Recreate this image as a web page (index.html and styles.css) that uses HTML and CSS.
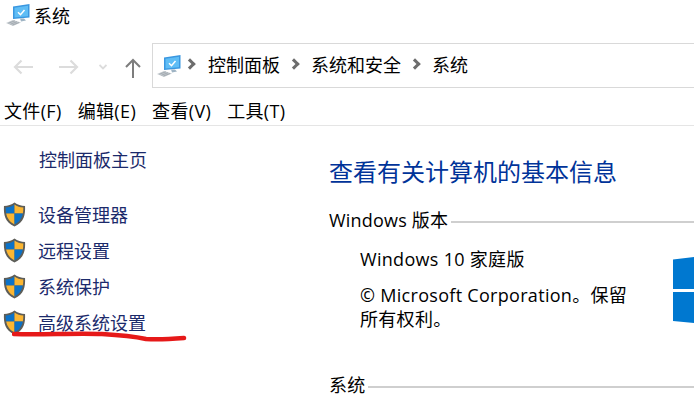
FILE: index.html
```html
<!DOCTYPE html>
<html lang="zh-CN">
	<head>
		<meta charset="UTF-8" />
		<meta name="viewport" content="width=device-width, initial-scale=1.0" />
		<title>系统</title>
		<link rel="stylesheet" href="styles.css">
	</head>
	<body>
		<svg width="0" height="0" class="defs">
			<defs>
				<symbol id="pc" viewBox="0 0 24 22">
					<path d="M7 2.500 23.500 0v13.500L7 15z" fill="#3a97e0"/>
					<path d="M8.500 3.700 22 1.700v10.600L8.500 13.600z" fill="#5fbdf5"/>
					<path d="m12 8.200 2.500 2.500 4-4.700" fill="none" stroke="#fff" stroke-width="1.500"/>
					<path d="M14 14.500h4l2 2-5 1z" fill="#9fb4c4"/>
					<path d="M0 19 7 16l8 2.500-8 3.500z" fill="#c3c9ce"/>
					<path d="M2.500 19.200 9 16.700M4.500 20.200l6.500-2.500M6.500 21l6.500-2.500" stroke="#8f979d" stroke-width=".6"/>
				</symbol>
				<symbol id="shield" viewBox="0 0 24 26">
					<path d="M12 .5C9 3 5 4 1 4c-.5 9 1 17 11 21.500C22 21 23.500 13 23 4c-4 0-8-1-11-3.500z" fill="#5d5d58"/>
					<path d="M12 2.500C9.500 4.500 6 5.500 2.800 5.700c0 2 .1 4 .5 6.300H12z" fill="#0b72c8"/>
					<path d="M12 2.500c2.500 2 6 3 9.200 3.200 0 2-.1 4-.5 6.300H12z" fill="#fbb632"/>
					<path d="M3.300 12H12v11.400C6.500 20.500 4.200 16.500 3.300 12z" fill="#fbb632"/>
					<path d="M20.700 12H12v11.400c5.500-2.900 7.800-6.900 8.700-11.400z" fill="#0b72c8"/>
				</symbol>
			</defs>
		</svg>

		<header class="titlebar">
			<svg class="pc-icon"><use href="#pc"/></svg>
			<span>系统</span>
		</header>

		<div class="navbar">
			<div class="nav-buttons">
				<svg width="20" height="16" viewBox="0 0 20 16" class="nav-back"><path d="M8.500 1.500 2 8l6.500 6.500M2.500 8H20" fill="none" stroke="#dcdcdc" stroke-width="2.200"/></svg>
				<svg width="20" height="16" viewBox="0 0 20 16" class="nav-forward"><path d="M11.500 1.500 18 8l-6.500 6.500M17.500 8H0" fill="none" stroke="#dcdcdc" stroke-width="2.200"/></svg>
				<svg width="8" height="6" viewBox="0 0 8 6" class="nav-down"><path d="m.5 1 3.500 3.500L7.500 1" fill="none" stroke="#dcdcdc" stroke-width="1.800"/></svg>
				<svg width="16" height="20" viewBox="0 0 16 20" class="nav-up"><path d="M1 9 8 2l7 7M8 2.500V20" fill="none" stroke="#7d7d7d" stroke-width="2"/></svg>
			</div>
			<div class="address">
				<svg class="pc-icon"><use href="#pc"/></svg>
				<span class="crumb-arrow"></span>
				<span>控制面板</span>
				<span class="crumb-arrow"></span>
				<span>系统和安全</span>
				<span class="crumb-arrow"></span>
				<span>系统</span>
			</div>
		</div>

		<nav class="menu">
			<span>文件(F)</span>
			<span>编辑(E)</span>
			<span>查看(V)</span>
			<span>工具(T)</span>
		</nav>

		<main class="content">
			<aside class="sidebar">
				<a class="home-link">控制面板主页</a>
				<ul class="task-list">
					<li><svg class="shield"><use href="#shield"/></svg>设备管理器</li>
					<li><svg class="shield"><use href="#shield"/></svg>远程设置</li>
					<li><svg class="shield"><use href="#shield"/></svg>系统保护</li>
					<li><svg class="shield"><use href="#shield"/></svg>高级系统设置</li>
				</ul>
				<svg class="red-mark" width="176" height="14" viewBox="0 0 176 14">
					<path d="M2 3C30 4 60 2 90 3c18 1 30 2 44 5 12 1 26 0 38-1" fill="none" stroke="#e61919" stroke-width="4.500" stroke-linecap="round"/>
				</svg>
			</aside>

			<section class="details">
				<h1>查看有关计算机的基本信息</h1>
				<h2 class="group-title">Windows 版本</h2>
				<div class="edition">
					<p class="edition-name">Windows 10 家庭版</p>
					<p class="copyright">© Microsoft Corporation。保留所有权利。</p>
				</div>
				<h2 class="group-title system-title">系统</h2>
				<svg class="win-logo" width="21" height="67" viewBox="0 0 21 67">
					<path d="M0 2.500 21 0v32H0zM0 35h21v31L0 64z" fill="#0078d0"/>
				</svg>
			</section>
		</main>
	</body>
</html>
```

FILE: styles.css
```css
* {
	box-sizing: border-box;
}
html,
body {
	margin: 0;
	height: 411px;
	overflow: hidden;
}
body {
	position: relative;
	background-color: #fff;
	color: #000;
	font-family: "Open Sans", "Noto Sans CJK SC", sans-serif;
	font-size: 18px;
}
.defs {
	position: absolute;
}
.pc-icon {
	width: 24px;
	height: 22px;
	flex: none;
}
.titlebar {
	display: flex;
	align-items: center;
	gap: 4px;
	height: 30px;
	padding-left: 6px;
}
.navbar {
	display: flex;
	height: 45px;
	margin-top: 13px;
}
.nav-buttons {
	display: flex;
	align-items: center;
	width: 152px;
	padding: 2px 0 0 13px;
}
.nav-forward {
	margin-left: 26px;
}
.nav-down {
	margin-left: 20px;
}
.nav-up {
	margin-left: 18px;
	margin-top: 2px;
}
.address {
	display: flex;
	align-items: center;
	flex: 1;
	padding: 0 0 3px 4px;
	border: 1px solid #d9d9d9;
	border-right: none;
}
.address .pc-icon {
	margin-top: 3px;
}
.crumb-arrow {
	width: 8px;
	height: 8px;
	margin: 0 13px 0 10px;
	border-top: 3px solid #6d6d6d;
	border-right: 3px solid #6d6d6d;
	transform: rotate(45deg);
}
.address .crumb-arrow:first-of-type {
	margin-left: 5px;
	margin-right: 14px;
}
.menu {
	display: flex;
	gap: 16px;
	height: 38px;
	padding: 10px 0 0 4px;
	letter-spacing: .35px;
	line-height: 27px;
	border-bottom: 1px solid #e5e5e5;
}
.content {
	display: flex;
}
.sidebar {
	position: relative;
	width: 329px;
	flex: none;
	padding-top: 21px;
	color: #1b2a6b;
}
.home-link {
	display: block;
	padding-left: 39px;
	line-height: 27px;
}
.task-list {
	list-style: none;
	margin: 22px 0 0;
	padding: 0 0 0 3px;
}
.task-list li {
	display: flex;
	align-items: center;
	gap: 12px;
	height: 36px;
}
.shield {
	width: 23px;
	height: 25px;
	flex: none;
}
.red-mark {
	position: absolute;
	left: 12px;
	top: 205px;
}
.details {
	position: relative;
	flex: 1;
}
h1 {
	margin: 28px 0 0;
	color: #003399;
	font-size: 24px;
	font-weight: 400;
	line-height: 36px;
}
.group-title {
	display: flex;
	align-items: center;
	gap: 3px;
	margin: 17px 0 0;
	font-size: 18px;
	font-weight: 400;
	letter-spacing: .2px;
	line-height: 27px;
}
.group-title::after {
	content: "";
	flex: 1;
	height: 2px;
	margin-top: 2px;
	background-color: #cfcfcf;
}
.edition {
	width: 300px;
	padding: 12px 0 0 31px;
	letter-spacing: .3px;
}
.edition p {
	margin: 0;
	line-height: 27px;
}
.edition .copyright {
	margin-top: 10px;
	line-height: 24px;
}
.system-title {
	margin-top: 41px;
}
.win-logo {
	position: absolute;
	right: 0;
	top: 131px;
}
```
